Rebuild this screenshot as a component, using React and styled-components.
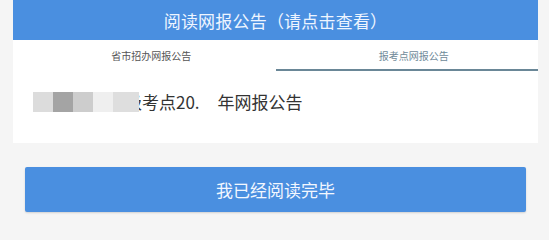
import React from "react";
import styled, { createGlobalStyle } from "styled-components";

const Global = createGlobalStyle`
  html, body { margin: 0; padding: 0; background: #f5f5f5; }
  body { font-family: "Noto Sans CJK SC", "Noto Sans", sans-serif; }
`;

const Page = styled.div`
  width: 549px;
  height: 224px;
  overflow: hidden;
  background: #f5f5f5;
`;

const Card = styled.div`
  margin-left: 13px;
  width: 525px;
  height: 143px;
  background: #ffffff;
  display: flex;
  flex-direction: column;
`;

const Header = styled.div`
  height: 40px;
  background: #4a8fe0;
  color: #eef5ff;
  font-size: 17px;
  display: flex;
  align-items: center;
  justify-content: center;
  letter-spacing: 0.2px;
`;

const Tabs = styled.div`
  display: flex;
  height: 31px;
`;

const Tab = styled.div`
  flex: 1;
  display: flex;
  align-items: center;
  justify-content: center;
  padding-left: 14px;
  padding-top: 1px;
  box-sizing: border-box;
  font-size: 10px;
  color: ${(p) => (p.$active ? "#6f8a99" : "#555")};
  border-bottom: 2px solid ${(p) => (p.$active ? "#6a8797" : "transparent")};
`;

const Content = styled.div`
  flex: 1;
  display: flex;
  align-items: flex-start;
  padding: 21px 0 0 20px;
`;

const Line = styled.div`
  display: flex;
  align-items: center;
  font-size: 17px;
  color: #333;
  height: 20px;
  line-height: 20px;
`;

const Mosaic = styled.div`
  display: flex;
  height: 20px;
  margin-right: -14px;
  position: relative;
  z-index: 1;
`;

const Tile = styled.span`
  display: block;
  width: ${(p) => p.$w}px;
  height: 20px;
  background: ${(p) => p.$c};
`;

const Gap = styled.span`
  display: inline-block;
  width: 18px;
`;

const Button = styled.div`
  margin: 24px 0 0 25px;
  width: 501px;
  height: 45px;
  background: #4a8fe0;
  border-radius: 2px;
  box-shadow: 0 1px 2px rgba(0, 0, 0, 0.15);
  color: #f2f7ff;
  font-size: 17px;
  display: flex;
  align-items: center;
  justify-content: center;
`;

export default function App() {
  return (
    <Page>
      <Global />
      <Card>
        <Header>阅读网报公告（请点击查看）</Header>
        <Tabs>
          <Tab>省市招办网报公告</Tab>
          <Tab $active>报考点网报公告</Tab>
        </Tabs>
        <Content>
          <Line>
            <Mosaic>
              <Tile $w={20} $c="#dcdcdc" />
              <Tile $w={20} $c="#a4a4a4" />
              <Tile $w={20} $c="#cdcdcd" />
              <Tile $w={20} $c="#efefef" />
              <Tile $w={26} $c="#dedede" />
            </Mosaic>
            级考点20.<Gap />年网报公告
          </Line>
        </Content>
      </Card>
      <Button>我已经阅读完毕</Button>
    </Page>
  );
}
